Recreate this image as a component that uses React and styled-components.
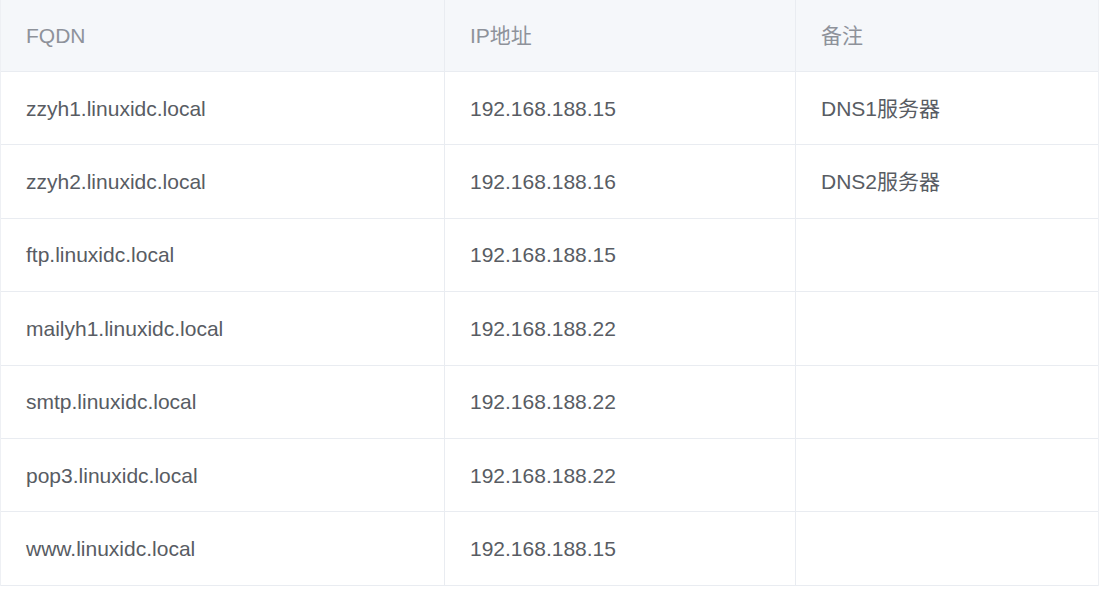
import React from "react";
import styled, { createGlobalStyle } from "styled-components";

const GlobalStyle = createGlobalStyle`
  html, body {
    margin: 0;
    padding: 0;
    background: #fff;
  }
  body {
    font-family: "Liberation Sans", "Noto Sans CJK SC", sans-serif;
  }
`;

const rows = [
  { fqdn: "zzyh1.linuxidc.local", ip: "192.168.188.15", note: "DNS1服务器" },
  { fqdn: "zzyh2.linuxidc.local", ip: "192.168.188.16", note: "DNS2服务器" },
  { fqdn: "ftp.linuxidc.local", ip: "192.168.188.15", note: "" },
  { fqdn: "mailyh1.linuxidc.local", ip: "192.168.188.22", note: "" },
  { fqdn: "smtp.linuxidc.local", ip: "192.168.188.22", note: "" },
  { fqdn: "pop3.linuxidc.local", ip: "192.168.188.22", note: "" },
  { fqdn: "www.linuxidc.local", ip: "192.168.188.15", note: "" },
];

const App = () => {
  return (
    <>
      <GlobalStyle />
      <Table>
        <Row header>
          <Cell header>FQDN</Cell>
          <Cell header>IP地址</Cell>
          <Cell header>备注</Cell>
        </Row>
        {rows.map((r, i) => (
          <Row key={i}>
            <Cell>{r.fqdn}</Cell>
            <Cell>{r.ip}</Cell>
            <Cell>{r.note}</Cell>
          </Row>
        ))}
      </Table>
    </>
  );
};

const Table = styled.div`
  width: 1099px;
  box-sizing: border-box;
  border-left: 1px solid #eef0f4;
  border-right: 1px solid #eef0f4;
  display: flex;
  flex-direction: column;
`;

const Row = styled.div`
  display: grid;
  grid-template-columns: 443px 351px 1fr;
  height: ${({ header }) => (header ? "72px" : "73.4px")};
  box-sizing: border-box;
  border-bottom: 1px solid #e9ecf1;
  background: ${({ header }) => (header ? "#f5f7fa" : "#fff")};
`;

const Cell = styled.div`
  display: flex;
  align-items: center;
  padding-left: 25px;
  padding-top: 1px;
  font-size: 21px;
  line-height: 24px;
  color: ${({ header }) => (header ? "#8e929a" : "#585c63")};
  white-space: nowrap;
  & + & {
    border-left: 1px solid #e9ecf1;
  }
`;

export default App;
